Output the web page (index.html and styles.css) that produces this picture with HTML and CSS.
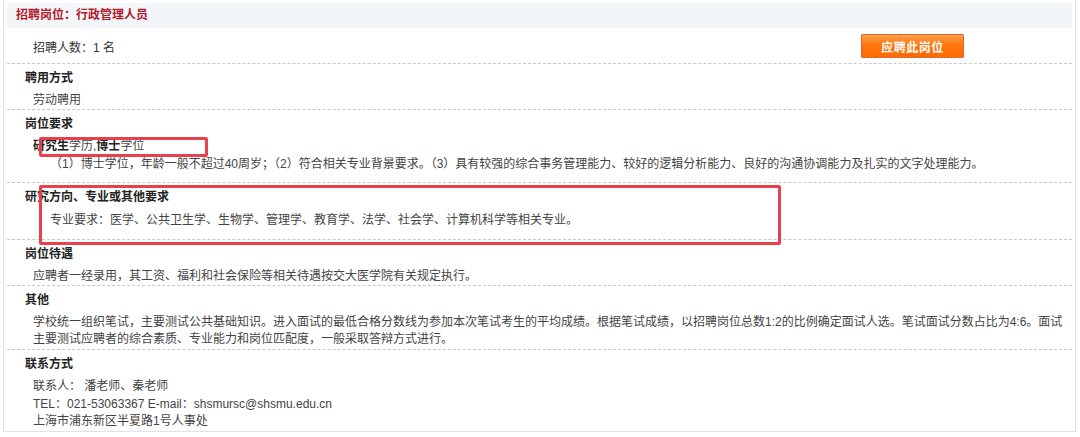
FILE: index.html
```html
<!DOCTYPE html>
<html lang="zh-CN">
<head>
  <meta charset="UTF-8">
  <title>招聘岗位：行政管理人员</title>
  <link rel="stylesheet" href="styles.css">
</head>
<body>

<div class="job">
  <div class="job-title">招聘岗位：行政管理人员</div>

  <div class="job-count">
    <span>招聘人数：1 名</span>
    <button class="apply">应聘此岗位</button>
  </div>

  <div class="item">
    <div class="item-head">聘用方式</div>
    <div class="item-body">劳动聘用</div>
  </div>

  <div class="item req">
    <div class="item-head">岗位要求</div>
    <div class="item-body">
      <div><b>研究生</b>学历,<b>博士</b>学位</div>
      <div class="sub">（1）博士学位，年龄一般不超过40周岁；（2）符合相关专业背景要求。（3）具有较强的综合事务管理能力、较好的逻辑分析能力、良好的沟通协调能力及扎实的文字处理能力。</div>
    </div>
  </div>

  <div class="item major">
    <div class="item-head">研究方向、专业或其他要求</div>
    <div class="item-body">
      <div class="sub">专业要求：医学、公共卫生学、生物学、管理学、教育学、法学、社会学、计算机科学等相关专业。</div>
    </div>
  </div>

  <div class="item">
    <div class="item-head">岗位待遇</div>
    <div class="item-body">应聘者一经录用，其工资、福利和社会保险等相关待遇按交大医学院有关规定执行。</div>
  </div>

  <div class="item other">
    <div class="item-head">其他</div>
    <div class="item-body">学校统一组织笔试，主要测试公共基础知识。进入面试的最低合格分数线为参加本次笔试考生的平均成绩。根据笔试成绩，以招聘岗位总数1:2的比例确定面试人选。笔试面试分数占比为4:6。面试主要测试应聘者的综合素质、专业能力和岗位匹配度，一般采取答辩方式进行。</div>
  </div>

  <div class="item last">
    <div class="item-head">联系方式</div>
    <div class="item-body">
      <div>联系人： 潘老师、秦老师</div>
      <div>TEL：021-53063367 E-mail：shsmursc@shsmu.edu.cn</div>
      <div>上海市浦东新区半夏路1号人事处</div>
    </div>
  </div>

  <!-- 标注框 -->
  <div class="mark mark-1"></div>
  <div class="mark mark-2"></div>
</div>

</body>
</html>
```

FILE: styles.css
```css
body { margin: 0; background: #fff; font-family: "Liberation Sans", "Noto Sans CJK SC", sans-serif; font-size: 12px; color: #333; }

.job { position: relative; width: 1073px; margin-left: 3px; padding: 3px 3px 0; border: 1px solid #dfe3f0; border-top: 0; box-sizing: border-box; }

.job-title { height: 25px; line-height: 25px; padding-left: 9px; background: #f3f6f9; color: #b3192c; font-weight: bold; font-size: 12px; }

.job-count { display: flex; align-items: center; justify-content: space-between; height: 34px; padding: 1px 0 0 26px; border-bottom: 1px dashed #c9c9c9; }
.apply { width: 103px; height: 24px; margin-right: 108px; padding: 0; border: 1px solid #d9692e; border-radius: 1px; background: linear-gradient(#ffa14a, #ff7410 45%, #ff6a00); color: #fff; font-family: inherit; font-size: 12px; font-weight: bold; letter-spacing: 0.5px; }

.item { padding-top: 3px; border-bottom: 1px dashed #c9c9c9; }
.item.req { padding-bottom: 9px; }
.item.major { padding-bottom: 10px; }
.item.other { padding-bottom: 1px; }
.item.last { border-bottom: 0; }
.item-head { height: 22px; line-height: 22px; padding-left: 18px; font-weight: bold; color: #222; }
.item-body { padding: 3px 4px 0 26px; line-height: 17px; color: #444; }
.item-body b { color: #222; }
.item-body .sub { padding-left: 17px; }
.req .item-body > div + div { margin-top: 1px; }
.major .item-body { padding-top: 4px; }
.last .item-body { line-height: 17.5px; }

.mark { position: absolute; border: 3px solid #e8414d; border-radius: 2px; }
.mark-1 { left: 35px; top: 137px; width: 163px; height: 14px; }
.mark-2 { left: 35px; top: 185px; width: 736px; height: 54px; }
```
